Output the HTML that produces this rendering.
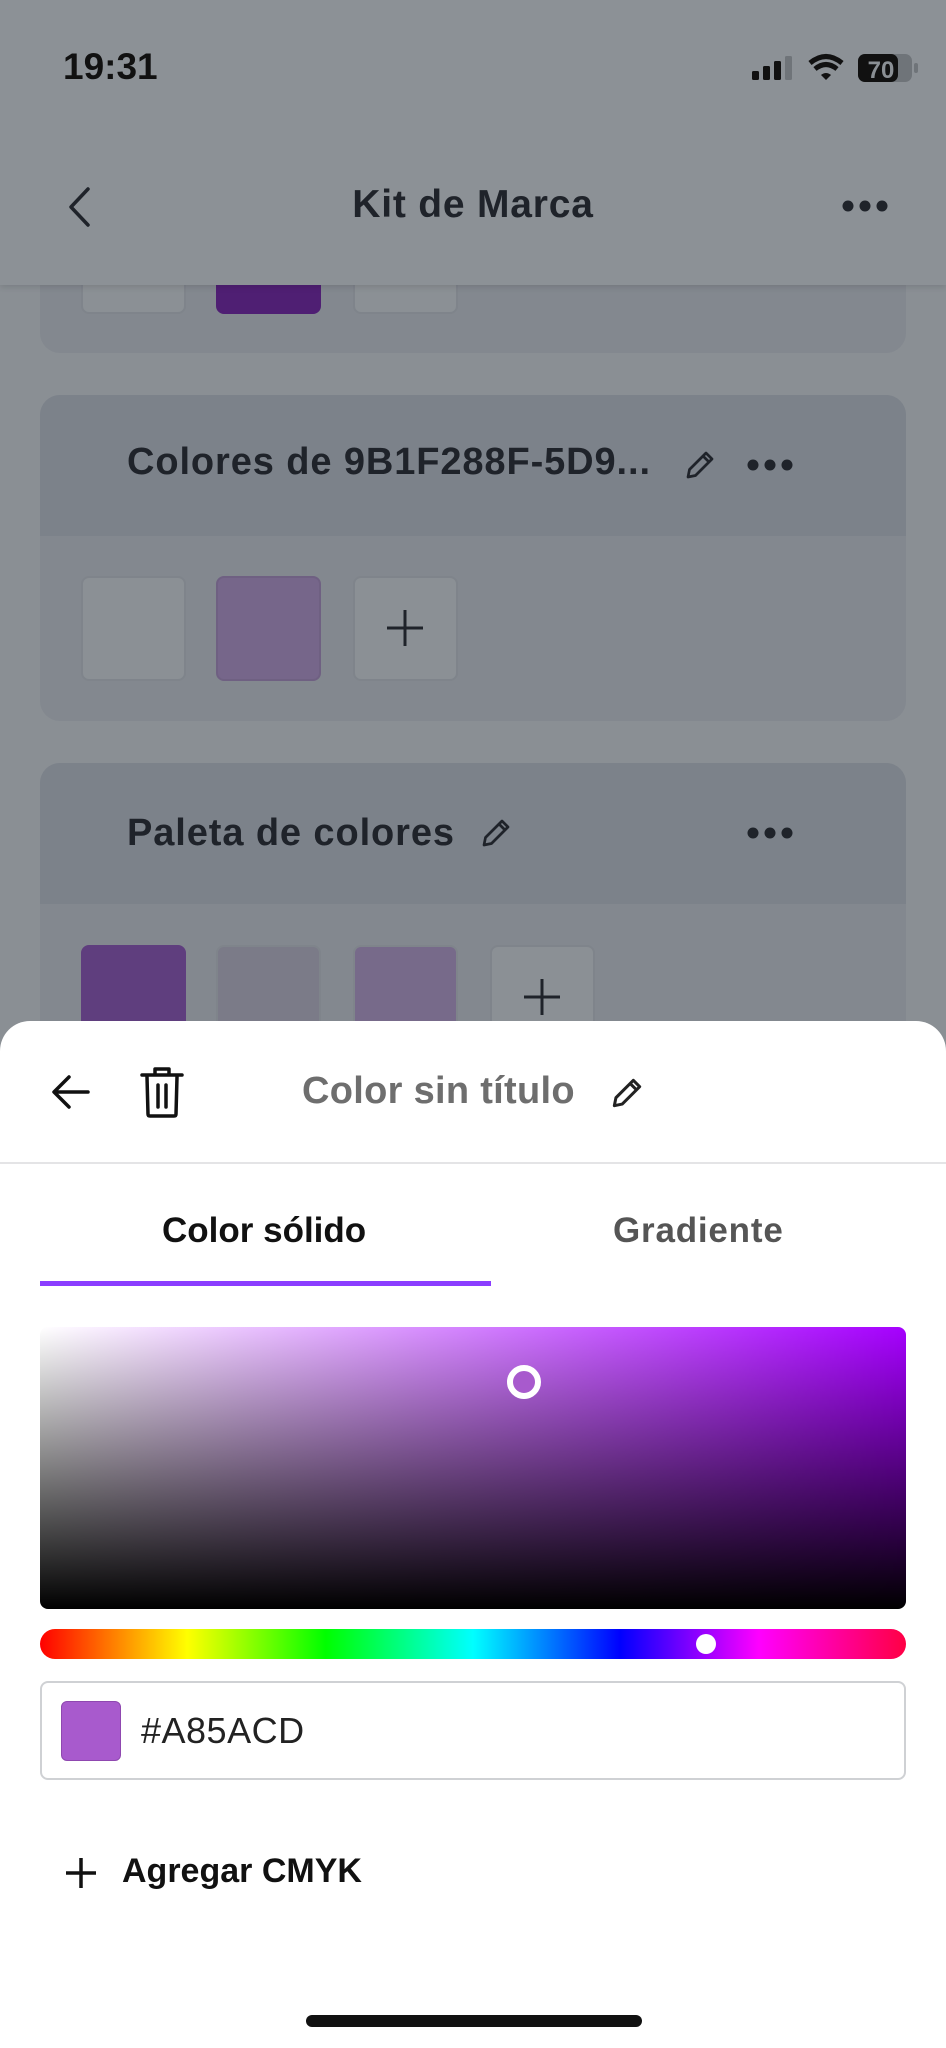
<!DOCTYPE html>
<html><head><meta charset="utf-8"><style>
*{margin:0;padding:0;box-sizing:border-box}
body{width:946px;height:2048px;position:relative;overflow:hidden;background:#8a8f94;font-family:"Liberation Sans",sans-serif}
.abs{position:absolute}
.card{position:absolute;left:40px;width:866px;background:#83888f;border-radius:20px;overflow:hidden}
.ch{position:absolute;left:0;top:0;width:100%;height:141px;background:#7c828a}
.ct{position:absolute;left:87px;font-size:38px;font-weight:bold;color:#1f232a;letter-spacing:0.9px}
.sw{position:absolute;width:105px;height:105px;border-radius:8px;border:2px solid #7f848b;background:#8b9095}
.plus{position:absolute;width:40px;height:40px}
</style></head><body>
<!-- header -->
<div class="abs" style="left:0;top:0;width:946px;height:285px;background:#8c9196;box-shadow:0 2px 6px rgba(0,0,0,0.12);z-index:2"></div>
<div class="abs" style="top:46px;z-index:3;left:63px;font-size:37px;font-weight:bold;color:#111">19:31</div>
<svg class="abs" style="left:750px;top:53px;z-index:3" width="170" height="30" viewBox="0 0 170 30">
<rect x="2" y="18" width="7" height="9" rx="1.5" fill="#111"/><rect x="13" y="13" width="7" height="14" rx="1.5" fill="#111"/><rect x="24" y="8" width="7" height="19" rx="1.5" fill="#111"/><rect x="35" y="3" width="7" height="24" rx="1.5" fill="#6f7479"/>
<path d="M60 10 Q76 -3 92 10" stroke="#111" stroke-width="5" fill="none"/><path d="M65 16 Q76 7 87 16" stroke="#111" stroke-width="5" fill="none"/><path d="M71 22 L76 27 L81 22 Q76 18 71 22Z" fill="#111"/>
<rect x="108" y="1" width="54" height="28" rx="7" fill="#6f7479"/><rect x="108" y="1" width="40" height="28" rx="7" fill="#111"/><rect x="164" y="10" width="4" height="10" rx="2" fill="#6f7479"/>
<text x="131" y="25" font-family="Liberation Sans" font-weight="bold" font-size="24" fill="#8a8f94" text-anchor="middle">70</text></svg>
<svg class="abs" style="left:66px;top:186px;z-index:3" width="28" height="42" viewBox="0 0 28 42"><path d="M22 3 L5 21 L22 39" stroke="#1f232a" stroke-width="3.5" fill="none" stroke-linecap="round" stroke-linejoin="round"/></svg>
<div class="abs" style="left:0;width:946px;top:183px;text-align:center;font-size:39px;font-weight:bold;color:#1f232a;z-index:3;letter-spacing:0.8px">Kit de Marca</div>
<svg class="abs" style="left:840px;top:198px;z-index:3" width="50" height="16"><circle cx="8" cy="8" r="5.5" fill="#1f232a"/><circle cx="25" cy="8" r="5.5" fill="#1f232a"/><circle cx="42" cy="8" r="5.5" fill="#1f232a"/></svg>
<!-- card 1 -->
<div class="card" style="top:180px;height:173px">
<div class="sw" style="left:41px;top:29px"></div>
<div class="sw" style="left:176px;top:29px;background:#4f1f73;border-color:#4f1f73"></div>
<div class="sw" style="left:313px;top:29px"></div>
</div>
<!-- card 2 -->
<div class="card" style="top:395px;height:326px">
<div class="ch"></div>
<div class="ct" style="top:46px">Colores de 9B1F288F-5D9...</div>
<svg class="abs" style="left:642px;top:52px" width="36" height="36" viewBox="0 0 24 24"><path d="M4 20 L5 15 L16 4 L20 8 L9 19 Z M14 6 L18 10" stroke="#1f232a" stroke-width="1.8" fill="none" stroke-linejoin="round"/></svg>
<svg class="abs" style="left:705px;top:62px" width="50" height="16"><circle cx="8" cy="8" r="5.5" fill="#1f232a"/><circle cx="25" cy="8" r="5.5" fill="#1f232a"/><circle cx="42" cy="8" r="5.5" fill="#1f232a"/></svg>
<div class="sw" style="left:41px;top:181px"></div>
<div class="sw" style="left:176px;top:181px;background:#76668a;border-color:#6f6082"></div>
<div class="sw" style="left:313px;top:181px"><svg class="plus" style="left:30px;top:30px" viewBox="0 0 40 40"><path d="M20 2V38M2 20H38" stroke="#1f232a" stroke-width="3"/></svg></div>
</div>
<!-- card 3 -->
<div class="card" style="top:763px;height:400px">
<div class="ch"></div>
<div class="ct" style="top:49px">Paleta de colores</div>
<svg class="abs" style="left:438px;top:52px" width="36" height="36" viewBox="0 0 24 24"><path d="M4 20 L5 15 L16 4 L20 8 L9 19 Z M14 6 L18 10" stroke="#1f232a" stroke-width="1.8" fill="none" stroke-linejoin="round"/></svg>
<svg class="abs" style="left:705px;top:62px" width="50" height="16"><circle cx="8" cy="8" r="5.5" fill="#1f232a"/><circle cx="25" cy="8" r="5.5" fill="#1f232a"/><circle cx="42" cy="8" r="5.5" fill="#1f232a"/></svg>
<div class="sw" style="left:41px;top:182px;background:#5f3e7e;border-color:#5f3e7e"></div>
<div class="sw" style="left:176px;top:182px;background:#7b7b88"></div>
<div class="sw" style="left:313px;top:182px;background:#776a8a"></div>
<div class="sw" style="left:450px;top:182px"><svg class="plus" style="left:30px;top:30px" viewBox="0 0 40 40"><path d="M20 2V38M2 20H38" stroke="#1f232a" stroke-width="3"/></svg></div>
</div>
<!-- sheet -->
<div class="abs" style="left:0;top:1021px;width:946px;height:1027px;background:#fff;border-radius:30px 30px 0 0;z-index:5">
<svg class="abs" style="left:50px;top:51px" width="42" height="40" viewBox="0 0 42 40"><path d="M38 20H5M19 5 L4 20 L19 35" stroke="#111" stroke-width="3.5" fill="none" stroke-linecap="round" stroke-linejoin="round"/></svg>
<svg class="abs" style="left:138px;top:44px" width="48" height="54" viewBox="0 0 48 54"><path d="M4 10H44M17 10V4H31V10M9 12 L10 49 Q10 51 12 51 H36 Q38 51 38 49 L39 12 M20 20V42M28 20V42" stroke="#111" stroke-width="3.5" fill="none" stroke-linejoin="round" stroke-linecap="round"/></svg>
<div class="abs" style="left:302px;top:49px;font-size:38px;font-weight:bold;color:#6e6e6e;letter-spacing:0.3px">Color sin título</div>
<svg class="abs" style="left:608px;top:53px" width="38" height="38" viewBox="0 0 24 24"><path d="M4 20 L5 15 L16 4 L20 8 L9 19 Z M14 6 L18 10" stroke="#222" stroke-width="1.9" fill="none" stroke-linejoin="round"/></svg>
<div class="abs" style="left:0;top:141px;width:946px;height:2px;background:#e4e4e6"></div>
<div class="abs" style="left:162px;top:190px;font-size:35px;font-weight:bold;color:#111">Color sólido</div>
<div class="abs" style="left:613px;top:190px;font-size:35px;font-weight:bold;color:#555;letter-spacing:0.8px">Gradiente</div>
<div class="abs" style="left:40px;top:260px;width:451px;height:5px;background:#8b3dff"></div>
<div class="abs" style="left:40px;top:306px;width:866px;height:282px;border-radius:8px;background:linear-gradient(to bottom,rgba(0,0,0,0),#000),linear-gradient(to right,#fff,#a600ff)"></div>
<div class="abs" style="left:507px;top:344px;width:34px;height:34px;border-radius:50%;border:6px solid #fff;background:#a85acd"></div>
<div class="abs" style="left:40px;top:608px;width:866px;height:30px;border-radius:15px;background:linear-gradient(to right,#f00,#ff0 17%,#0f0 33%,#0ff 50%,#00f 67%,#f0f 83%,#f04)"></div>
<div class="abs" style="left:696px;top:613px;width:20px;height:20px;border-radius:50%;background:#fff"></div>
<div class="abs" style="left:40px;top:660px;width:866px;height:99px;border:2px solid #cfd1d4;border-radius:8px"></div>
<div class="abs" style="left:61px;top:680px;width:60px;height:60px;border-radius:6px;background:#a85acd;border:1px solid #8f48b0"></div>
<div class="abs" style="left:141px;top:689px;font-size:36px;color:#222;letter-spacing:0.5px">#A85ACD</div>
<svg class="abs" style="left:64px;top:835px" width="34" height="34" viewBox="0 0 34 34"><path d="M17 2V32M2 17H32" stroke="#111" stroke-width="3.5"/></svg>
<div class="abs" style="left:122px;top:831px;font-size:34px;font-weight:bold;color:#111">Agregar CMYK</div>
<div class="abs" style="left:306px;top:994px;width:336px;height:12px;border-radius:6px;background:#111"></div>
</div>
</body></html>
